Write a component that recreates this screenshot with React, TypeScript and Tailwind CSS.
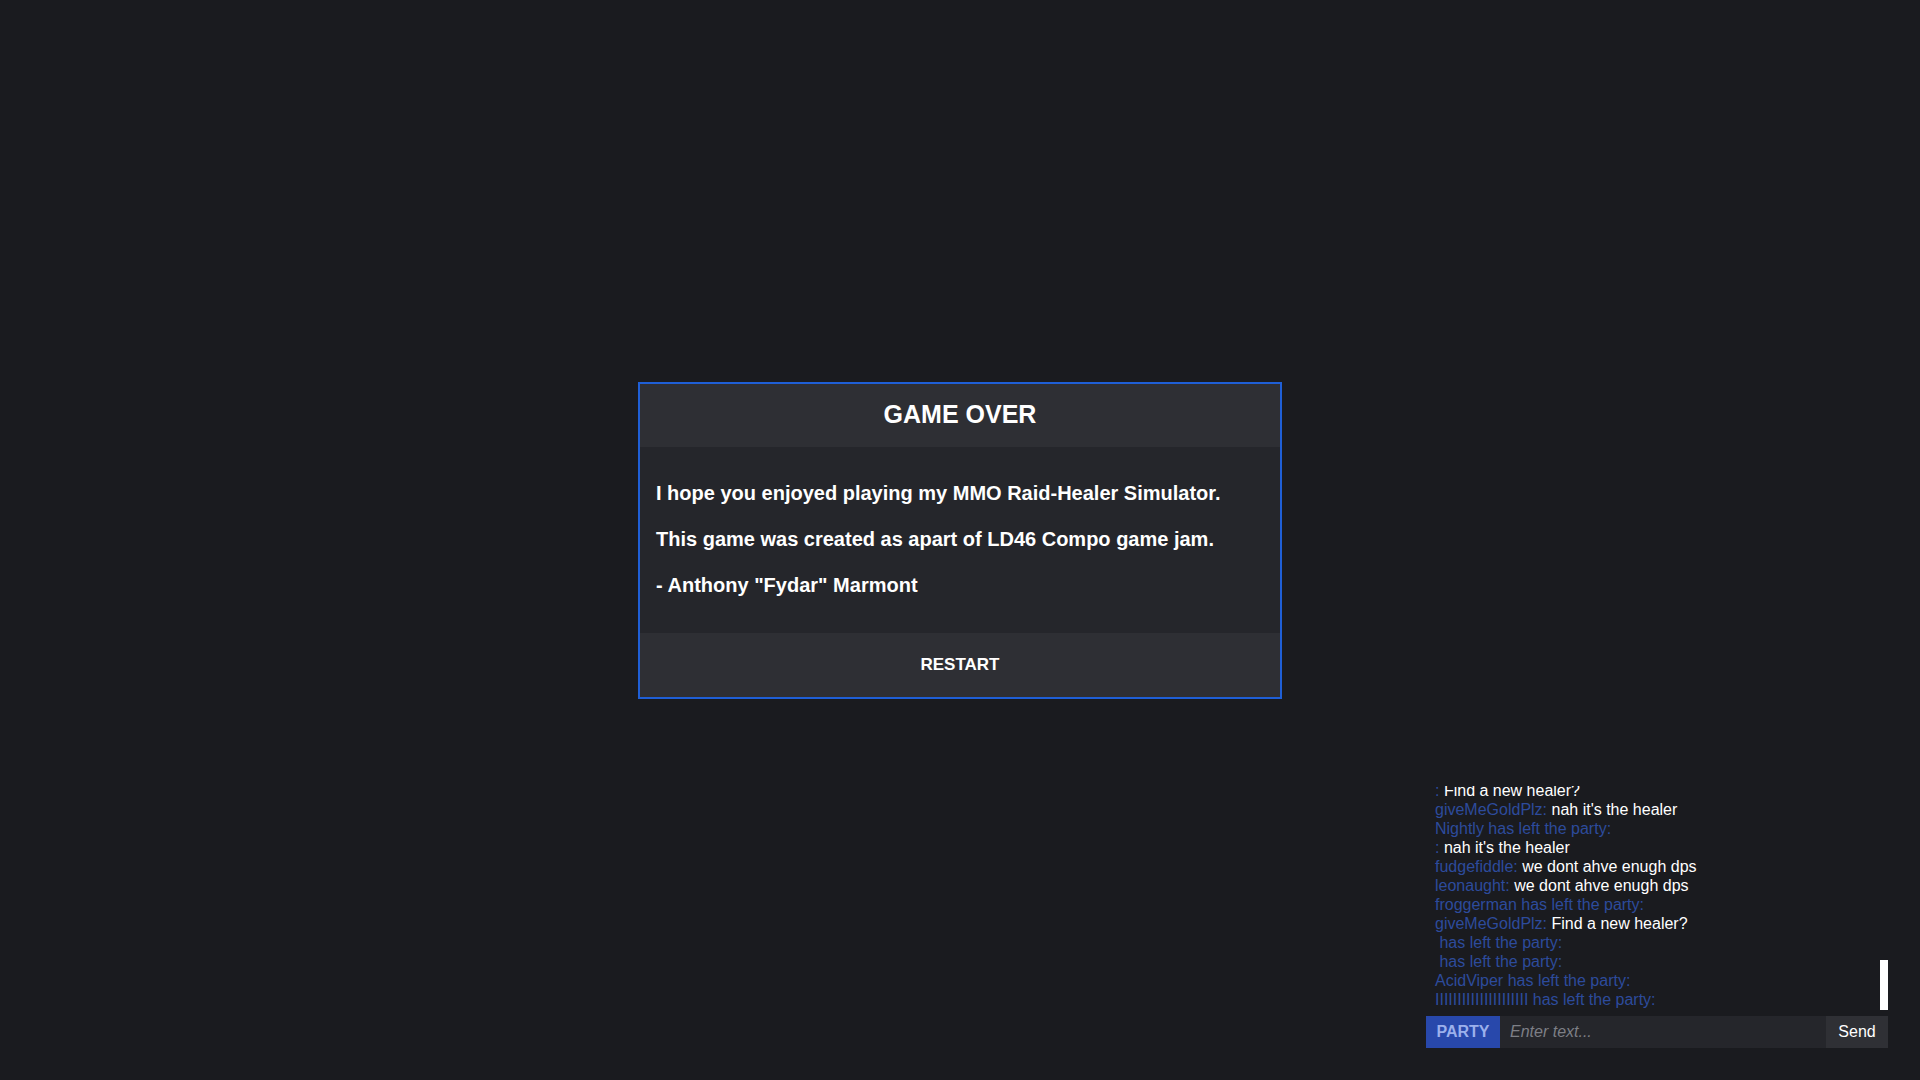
import React from "react";

type ChatLine = { name: string; text?: string };

const lines: ChatLine[] = [
  { name: ":", text: "Find a new healer?" },
  { name: "giveMeGoldPlz:", text: "nah it's the healer" },
  { name: "Nightly has left the party:" },
  { name: ":", text: "nah it's the healer" },
  { name: "fudgefiddle:", text: "we dont ahve enugh dps" },
  { name: "leonaught:", text: "we dont ahve enugh dps" },
  { name: "froggerman has left the party:" },
  { name: "giveMeGoldPlz:", text: "Find a new healer?" },
  { name: " has left the party:" },
  { name: " has left the party:" },
  { name: "AcidViper has left the party:" },
  { name: "IIIIIIIIIIIIIIIIIIIII has left the party:" },
];

function Chat() {
  return (
    <div className="absolute bottom-8 right-8 w-[462px] font-['Liberation_Sans',Arial,sans-serif]">
      <div className="relative flex h-[224px] flex-col justify-end overflow-hidden pb-px pl-[9px]">
        {lines.map((l, i) => (
          <div key={i} className="shrink-0 whitespace-pre text-base leading-[19px]">
            <span className="text-[#2d4b9c]">{l.name}</span>
            {l.text && <span className="text-white"> {l.text}</span>}
          </div>
        ))}
        <div className="absolute bottom-0 right-0 h-[50px] w-2 bg-white" />
      </div>
      <div className="mt-[6px] flex h-8 text-base">
        <div className="flex w-[74px] items-center justify-center bg-[#2848ab] font-bold text-[#9bb0ec]">PARTY</div>
        <div className="flex flex-1 items-center bg-[#25262b] pl-[10px] italic text-[#7d7f86]">Enter text...</div>
        <div className="flex w-[62px] items-center justify-center bg-[#2f3035] text-white">Send</div>
      </div>
    </div>
  );
}

export default function App() {
  return (
    <div className="relative flex h-screen w-full items-center justify-center bg-[#1a1b1f] font-['Liberation_Sans',Arial,sans-serif]">
      <div className="w-[644px] border-2 border-[#1f5fd6] text-white">
        <div className="flex h-[63px] items-center justify-center bg-[#2e2f34] text-[25px] font-bold">GAME OVER</div>
        <div className="flex flex-col gap-[18px] bg-[#25262b] px-4 pt-8 pb-[34px] text-xl font-bold leading-7">
          <p>I hope you enjoyed playing my MMO Raid-Healer Simulator.</p>
          <p>This game was created as apart of LD46 Compo game jam.</p>
          <p>- Anthony "Fydar" Marmont</p>
        </div>
        <div className="flex h-[64px] items-center justify-center bg-[#2e2f34] text-[17px] font-bold">RESTART</div>
      </div>
      <Chat />
    </div>
  );
}
